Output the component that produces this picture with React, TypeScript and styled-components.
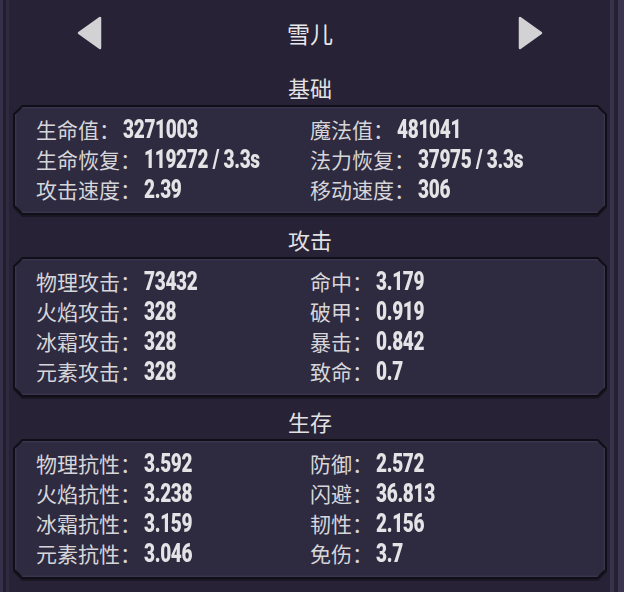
import React from "react";
import styled, { createGlobalStyle } from "styled-components";

const GlobalStyle = createGlobalStyle`
  html, body {
    margin: 0;
    padding: 0;
    background: #272235;
  }
  * {
    box-sizing: border-box;
  }
`;

type Stat = { label: string; value: string };

const sections: { title: string; rows: [Stat, Stat][] }[] = [
  {
    title: "基础",
    rows: [
      [{ label: "生命值", value: "3271003" }, { label: "魔法值", value: "481041" }],
      [{ label: "生命恢复", value: "119272 / 3.3s" }, { label: "法力恢复", value: "37975 / 3.3s" }],
      [{ label: "攻击速度", value: "2.39" }, { label: "移动速度", value: "306" }],
    ],
  },
  {
    title: "攻击",
    rows: [
      [{ label: "物理攻击", value: "73432" }, { label: "命中", value: "3.179" }],
      [{ label: "火焰攻击", value: "328" }, { label: "破甲", value: "0.919" }],
      [{ label: "冰霜攻击", value: "328" }, { label: "暴击", value: "0.842" }],
      [{ label: "元素攻击", value: "328" }, { label: "致命", value: "0.7" }],
    ],
  },
  {
    title: "生存",
    rows: [
      [{ label: "物理抗性", value: "3.592" }, { label: "防御", value: "2.572" }],
      [{ label: "火焰抗性", value: "3.238" }, { label: "闪避", value: "36.813" }],
      [{ label: "冰霜抗性", value: "3.159" }, { label: "韧性", value: "2.156" }],
      [{ label: "元素抗性", value: "3.046" }, { label: "免伤", value: "3.7" }],
    ],
  },
];

const Arrow = ({ dir }: { dir: "left" | "right" }) => (
  <svg width="25" height="34" viewBox="0 0 25 34">
    <polygon
      points={dir === "left" ? "23,2 23,32 2,17" : "2,2 2,32 23,17"}
      fill="#d2d2d4"
      stroke="#d2d2d4"
      strokeWidth="2.5"
      strokeLinejoin="round"
    />
  </svg>
);

const App = () => {
  return (
    <>
      <GlobalStyle />
      <Frame>
        <Header>
          <Arrow dir="left" />
          <HeroName>雪儿</HeroName>
          <Arrow dir="right" />
        </Header>
        {sections.map((section, i) => (
          <Section key={section.title} first={i === 0}>
            <SectionTitle>{section.title}</SectionTitle>
            <PanelShadow>
              <Panel>
                <PanelInner>
                  {section.rows.map((row, r) => (
                    <Row key={`r-${r}`}>
                      {row.map(stat => (
                        <Cell key={stat.label}>
                          <Label>{stat.label}：</Label>
                          <Value>{stat.value}</Value>
                        </Cell>
                      ))}
                    </Row>
                  ))}
                </PanelInner>
              </Panel>
            </PanelShadow>
          </Section>
        ))}
      </Frame>
    </>
  );
};

const Frame = styled.div`
  width: 624px;
  height: 592px;
  padding: 16px 17px 0 13px;
  background: #272235;
  overflow: hidden;
  box-shadow:
    inset 3px 0 0 #36314a,
    inset 6px 0 0 #221e2e,
    inset 9px 0 0 #2f2a40,
    inset -6px 0 0 #3a3550,
    inset -10px 0 0 #252131,
    inset -14px 0 0 #38334d;
`;

const Header = styled.div`
  display: grid;
  grid-template-columns: 25px 1fr 25px;
  align-items: center;
  height: 34px;
  padding: 0 64px;
  margin-bottom: 23px;
`;

const HeroName = styled.div`
  text-align: center;
  font-family: "Noto Sans CJK SC", "Noto Sans", sans-serif;
  font-size: 23px;
  line-height: 34px;
  color: #e8e8ea;
`;

const Section = styled.section<{ first?: boolean }>`
  display: flex;
  flex-direction: column;
  margin-top: ${p => (p.first ? "0" : "10px")};
`;

const SectionTitle = styled.div`
  height: 32px;
  padding-bottom: 4px;
  line-height: 28px;
  text-align: center;
  font-family: "Noto Sans CJK SC", "Noto Sans", sans-serif;
  font-size: 22px;
  color: #e2e2e4;
`;

const PanelShadow = styled.div`
  filter: drop-shadow(0 2px 0 rgba(10, 8, 16, 0.45));
`;

const Panel = styled.div`
  background: #100e16;
  padding: 2px;
  clip-path: polygon(
    9px 0, calc(100% - 9px) 0, 100% 9px, 100% calc(100% - 9px),
    calc(100% - 9px) 100%, 9px 100%, 0 calc(100% - 9px), 0 9px
  );
`;

const PanelInner = styled.div`
  background: #2e2a3f;
  padding: 7px 0 9px 21px;
  box-shadow: inset 0 0 0 1px #3a354f, inset 0 0 0 2px #332e45;
  clip-path: polygon(
    8px 0, calc(100% - 8px) 0, 100% 8px, 100% calc(100% - 8px),
    calc(100% - 8px) 100%, 8px 100%, 0 calc(100% - 8px), 0 8px
  );
`;

const Row = styled.div`
  display: grid;
  grid-template-columns: 274px 1fr;
  height: 30px;
  align-items: baseline;
`;

const Cell = styled.div`
  display: flex;
  align-items: baseline;
  line-height: 30px;
  white-space: nowrap;
`;

const Label = styled.span`
  font-family: "Noto Sans CJK SC", "Noto Sans", sans-serif;
  font-size: 21px;
  color: #d6d6da;
`;

const Value = styled.span`
  display: inline-block;
  margin-left: 3px;
  font-family: Roboto, "Liberation Sans", sans-serif;
  font-weight: 900;
  font-size: 25px;
  letter-spacing: -0.4px;
  color: #e4e4e6;
  transform: scaleX(0.76);
  transform-origin: left center;
`;

export default App;
